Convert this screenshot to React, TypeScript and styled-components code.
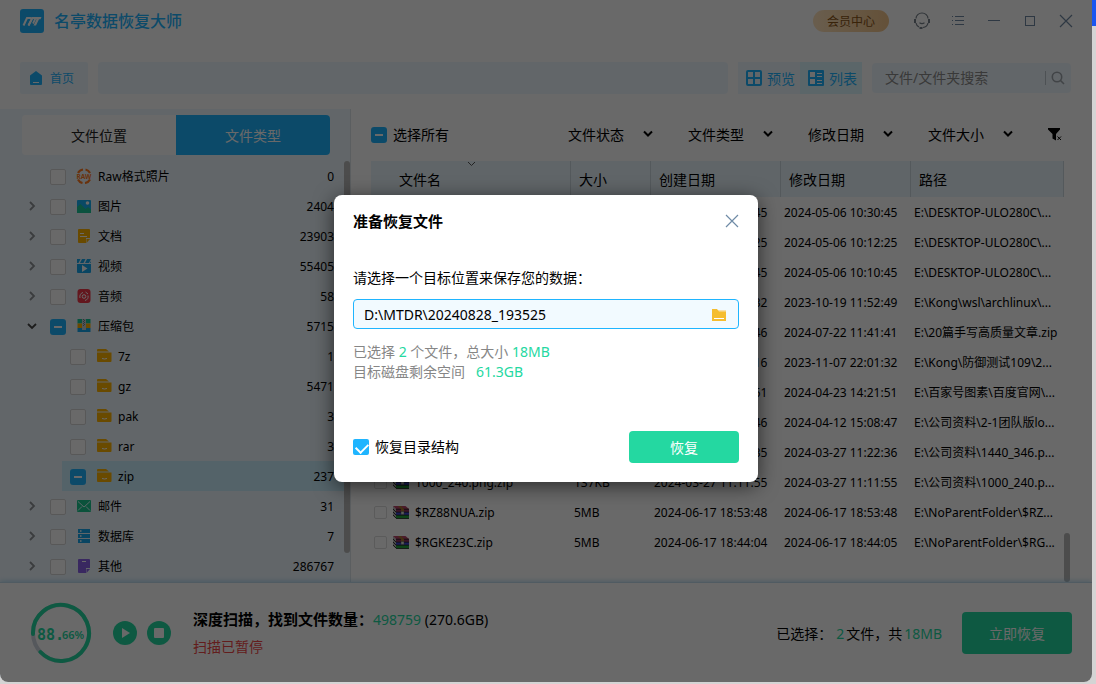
import React, { useEffect, useRef, useState } from "react";
import styled, { createGlobalStyle } from "styled-components";

const blue = "#1fb5ff";
const green = "#24d8a1";
const paleBlue = "#eff8ff";
const font = '"Noto Sans", "Noto Sans CJK SC", sans-serif';

const GlobalStyle = createGlobalStyle`
  * { box-sizing: border-box; }
  body { margin: 0; font-family: ${font}; font-size: 14px; color: #000; background: #d4d4d4; }
  button, input { font: inherit; color: inherit; }
  button { background: none; border: 0; padding: 0; cursor: pointer; white-space: nowrap; }
  ul { list-style: none; margin: 0; padding: 0; }
  p, h1, h2 { margin: 0; }
`;

const Desktop = styled.div`
  height: 100vh;
  min-height: 600px;
  padding: 0 4px 2px 0;
  background: linear-gradient(#1a56f0, #1a56f0) no-repeat top right / 4px 26px, #d4d4d4;
`;

const Window = styled.div`
  position: relative;
  height: 100%;
  display: flex;
  flex-direction: column;
  overflow: hidden;
  background: #fff;
  border-radius: 0 0 8px 8px;
`;

const TitleBar = styled.header`
  display: flex;
  align-items: center;
  height: 42px;
  padding: 0 18px 0 20px;
`;

const AppName = styled.h1`
  flex: 1;
  margin-left: 10px;
  font-size: 16px;
  line-height: 22px;
  font-weight: 500;
  color: ${blue};
`;

const MemberButton = styled.button`
  width: 76px;
  height: 22px;
  margin-right: 25px;
  border-radius: 11px;
  font-size: 12px;
  color: #8a5518;
  background: linear-gradient(90deg, #ffe3bd, #f2c48a);
`;

const WindowControls = styled.div`
  display: flex;
  gap: 20px;
  color: #7189a3;
  button { display: flex; width: 16px; height: 16px; }
`;

const Toolbar = styled.div`
  display: flex;
  align-items: center;
  height: 67px;
  padding: 5px 21px 0 20px;
  gap: 10px;
`;

const HomeButton = styled.button`
  display: flex;
  align-items: center;
  gap: 8px;
  width: 68px;
  height: 32px;
  padding-left: 10px;
  border-radius: 2px;
  background: ${paleBlue};
  color: ${blue};
  font-size: 12px;
`;

const AddressBar = styled.div`
  flex: 1;
  height: 32px;
  border-radius: 4px;
  background: ${paleBlue};
`;

const ViewSwitch = styled.div`
  display: flex;
`;

const ViewButton = styled.button<{ $active?: boolean }>`
  display: flex;
  align-items: center;
  gap: 5px;
  width: 62px;
  height: 32px;
  padding-left: 8px;
  color: ${blue};
  background: ${(p) => (p.$active ? "#dcf7ff" : paleBlue)};
`;

const SearchBox = styled.div`
  display: flex;
  align-items: center;
  width: 199px;
  height: 30px;
  padding: 0 6px 0 13px;
  border-radius: 4px;
  background: ${paleBlue};
  input {
    flex: 1;
    min-width: 0;
    border: 0;
    padding: 0 0 2px;
    outline: 0;
    background: none;
  }
  input::placeholder { color: #8a8a8a; opacity: 1; }
  button {
    display: flex;
    padding-left: 5px;
    border-left: 1px solid #bcc6cc;
    color: #9fa6ac;
  }
`;

const Body = styled.div`
  flex: 1;
  min-height: 0;
  display: flex;
`;

const Sidebar = styled.aside`
  width: 351px;
  padding-top: 6px;
  display: flex;
  flex-direction: column;
  background: ${paleBlue};
  border-right: 1px solid #dde5ea;
  overflow: hidden;
`;

const Tabs = styled.div`
  display: flex;
  height: 40px;
  margin: 0 20px 0 22px;
  border-radius: 4px;
  overflow: hidden;
  flex-shrink: 0;
`;

const Tab = styled.button<{ $active?: boolean }>`
  flex: 1;
  background: ${(p) => (p.$active ? blue : "#fff")};
  color: ${(p) => (p.$active ? "#fff" : "#222")};
`;

const TreeArea = styled.div`
  display: flex;
  flex: 1;
  min-height: 0;
  padding-top: 6px;
`;

const Tree = styled.ul`
  flex: 1;
  min-width: 0;
  overflow: hidden;
`;

const TreeRow = styled.li<{ $child?: boolean; $active?: boolean }>`
  display: flex;
  align-items: center;
  height: 30px;
  margin-left: ${(p) => (p.$child ? 62 : 22)}px;
  padding: 2px 10px 0 8px;
  font-size: 12px;
  background: ${(p) => (p.$active ? "#cdf0ff" : "transparent")};
  label { flex: 1; white-space: nowrap; }
  label, output { padding-bottom: 2px; }
`;

const Expander = styled.div`
  display: flex;
  width: 20px;
  height: 16px;
  align-items: center;
  button { display: flex; margin: 0 0 2px -3px; }
`;

const TypeIcon = styled.svg`
  width: 16px;
  height: 16px;
  margin: 0 6px 2px 10px;
  flex-shrink: 0;
`;

const Scrollbar = styled.div<{ $top: number; $height?: number }>`
  width: 6px;
  height: ${(p) => (p.$height ? p.$height + "px" : "auto")};
  margin-top: ${(p) => p.$top}px;
  border-radius: 3px;
  background: #b9b9b9;
  flex-shrink: 0;
`;

const CheckInput = styled.input<{ $tone: "tree" | "row" | "solid" }>`
  appearance: none;
  position: relative;
  flex-shrink: 0;
  width: ${(p) => (p.$tone === "row" ? 13 : 16)}px;
  height: ${(p) => (p.$tone === "row" ? 13 : 16)}px;
  margin: 0;
  border: 1px solid ${(p) => (p.$tone === "row" ? "#dcdcdc" : "#d6d6d6")};
  border-radius: 2px;
  background: #fff;
  &:indeterminate {
    border: 0;
    border-radius: 3px;
    background: linear-gradient(#fff, #fff) no-repeat center / 8px 2px, ${blue};
  }
  &:checked {
    border: 0;
    background: ${blue};
  }
  &:checked::after {
    content: "";
    position: absolute;
    left: 5px;
    top: 2px;
    width: 6px;
    height: 10px;
    border: solid #fff;
    border-width: 0 2px 2px 0;
    transform: rotate(45deg);
  }
`;

const Main = styled.main`
  flex: 1;
  min-width: 0;
  display: flex;
  flex-direction: column;
  padding-left: 20px;
`;

const FilterBar = styled.div`
  display: flex;
  align-items: center;
  height: 52px;
  padding-right: 29px;
`;

const SelectAll = styled.div`
  flex: 1;
  display: flex;
  align-items: center;
  gap: 6px;
  label { padding-bottom: 2px; }
`;

const FilterButton = styled.button`
  display: flex;
  align-items: center;
  justify-content: space-between;
  width: 85px;
  margin-right: 35px;
  padding-bottom: 2px;
`;

const TableArea = styled.div`
  flex: 1;
  min-height: 0;
  display: flex;
  padding-right: 22px;
`;

const TableClip = styled.div`
  flex: 1;
  min-width: 0;
  overflow: hidden;
`;

const FileTable = styled.table`
  width: 100%;
  table-layout: fixed;
  border-collapse: separate;
  border-spacing: 0;
  th {
    position: relative;
    height: 36px;
    padding: 0 8px;
    text-align: left;
    font-weight: 400;
    background: #e8f5fd;
    border-right: 1px solid #cbd8df;
  }
  th:first-child { padding-left: 28px; }
  td {
    height: 30px;
    padding: 0 0 0 3px;
    font-size: 12px;
    white-space: nowrap;
    overflow: hidden;
  }
`;

const SortMark = styled.svg`
  position: absolute;
  left: 96px;
  top: 0;
`;

const FileLabel = styled.label`
  display: flex;
  align-items: center;
  gap: 6px;
`;

const Footer = styled.footer`
  position: relative;
  display: flex;
  align-items: center;
  height: 100px;
  padding: 0 20px 0 30px;
  border-top: 1px solid #c3deef;
  box-shadow: 0 -1px 5px rgba(120, 190, 230, 0.5);
  background: #fff;
`;

const ScanControls = styled.div`
  display: flex;
  gap: 10px;
  margin: 0 22px 0 21px;
  button { display: flex; }
`;

const ScanStatus = styled.div`
  flex: 1;
  line-height: 27px;
  white-space: nowrap;
  strong { font-size: 15px; }
`;

const Accent = styled.span`
  color: ${green};
`;

const Paused = styled.p`
  color: #f04848;
`;

const Summary = styled.p`
  margin-right: 20px;
  white-space: nowrap;
`;

const SelectedCount = styled(Accent)`
  margin: 0 2px 0 4px;
`;

const SelectedSize = styled(Accent)`
  margin-left: 2px;
`;

const PrimaryButton = styled.button<{ $large?: boolean }>`
  width: 110px;
  height: ${(p) => (p.$large ? 42 : 32)}px;
  border-radius: 4px;
  background: ${green};
  color: #fff;
`;

const Overlay = styled.div`
  position: absolute;
  inset: 0;
  display: flex;
  align-items: center;
  justify-content: center;
  padding-bottom: 5px;
  background: rgba(0, 0, 0, 0.59);
`;

const Dialog = styled.section`
  width: 424px;
  padding: 14px 19px 19px;
  border-radius: 8px;
  background: #fff;
  box-shadow: 0 4px 20px rgba(0, 0, 0, 0.6);
`;

const DialogHeader = styled.div`
  display: flex;
  align-items: center;
  justify-content: space-between;
  height: 24px;
  h2 { font-size: 15px; font-weight: 700; line-height: 24px; }
  button { display: flex; margin-right: -1px; color: #6f8ba6; }
`;

const TargetLabel = styled.label`
  display: block;
  margin: 34px 0 10px;
  line-height: 22px;
`;

const PathField = styled.div`
  display: flex;
  align-items: center;
  height: 30px;
  padding: 0 11px 0 10px;
  border: 1px solid ${blue};
  border-radius: 4px;
  background: #f2faff;
  input {
    flex: 1;
    min-width: 0;
    padding: 0;
    border: 0;
    outline: 0;
    background: none;
  }
  button { display: flex; padding-top: 2px; }
`;

const Details = styled.div`
  margin: 13px 0 49px;
  line-height: 20px;
  color: #868686;
`;

const DialogFooter = styled.div`
  display: flex;
  align-items: center;
  justify-content: space-between;
`;

const CheckOption = styled.div`
  display: flex;
  align-items: center;
  gap: 6px;
  label { padding-bottom: 2px; }
`;

type CheckProps = { id?: string; mixed?: boolean; tone: "tree" | "row" | "solid"; initial?: boolean; label?: string };

function Check({ id, mixed, tone, initial = false, label }: CheckProps) {
  const ref = useRef<HTMLInputElement>(null);
  const [on, setOn] = useState(initial);
  useEffect(() => {
    if (ref.current) ref.current.indeterminate = !!mixed;
  }, [mixed]);
  return (
    <CheckInput ref={ref} id={id} type="checkbox" $tone={tone} checked={on} aria-label={label} onChange={(e) => setOn(e.target.checked)} />
  );
}

const Chevron = ({ open }: { open?: boolean }) => (
  <svg width="10" height="10" viewBox="0 0 10 10" fill="none" stroke={open ? "#444" : "#8d9296"} strokeWidth="1.8">
    <path d={open ? "M1 3l4 4 4-4" : "M3 1l4 4-4 4"} />
  </svg>
);

const icons: Record<string, React.ReactNode> = {
  raw: (
    <>
      <path d="M2 5a6.700 6.700 0 0 1 5-3.500M9.500 1.500A6.700 6.700 0 0 1 14 5M2 11.500A6.700 6.700 0 0 0 6.500 15M9 15a6.700 6.700 0 0 0 5-3.500" fill="none" stroke="#ff7a20" strokeWidth="2.200" />
      <text x="8" y="10.5" textAnchor="middle" fontSize="6.5" fontWeight="700" fill="#ff7a20">RAW</text>
    </>
  ),
  image: (
    <>
      <rect x="1" y="2" width="14" height="13" rx="1" fill="#17b1f5" />
      <path d="M1 9l3.500-3 5 5 2.500-2 3 2.500V15H1z" fill="#1cc79a" />
      <circle cx="11.5" cy="5" r="1.800" fill="#fff" />
    </>
  ),
  doc: (
    <>
      <path d="M2 2a1 1 0 0 1 1-1h10a1 1 0 0 1 1 1v8h-4v5H3a1 1 0 0 1-1-1z" fill="#ffb400" />
      <path d="M14 11l-3.500 4v-4z" fill="#ffb400" />
      <path d="M4 5.500h4M4 8.500h7" stroke="#fff" />
    </>
  ),
  video: (
    <>
      <path d="M1 6h14v8a1 1 0 0 1-1 1H2a1 1 0 0 1-1-1zM1 1h3.500L2.500 5H1zM6 1h3.500l-2 4H4zM11 1h4l-2 4H9zM15 3v2h-1z" fill="#17a9ef" />
      <path d="M6 7l5.500 3.500L6 14z" fill="#fff" />
    </>
  ),
  audio: (
    <>
      <rect x="1.500" y="1" width="13" height="14" rx="3" fill="#f0384a" />
      <circle cx="8" cy="8.500" r="1.800" fill="none" stroke="#fff" />
      <path d="M4 10a4.300 4.300 0 0 1 3-5.500M12 7.500a4.300 4.300 0 0 1-3 5M9.500 4l2.500 2" fill="none" stroke="#fff" />
    </>
  ),
  archive: (
    <>
      <path d="M1.500 1h13v4.500h-13z" fill="#17c79a" />
      <path d="M1.500 5.500h13v4.500h-13z" fill="#ffb400" />
      <path d="M1.500 10h13v4h-13z" fill="#17a9ef" />
      <path d="M6 1h4v8H6z" fill="#c2ced3" />
      <path d="M7.500 1v8M8.500 2v8" stroke="#71818a" strokeDasharray="1 1" />
      <rect x="6" y="8" width="4" height="4" fill="#c2ced3" />
    </>
  ),
  folder: (
    <>
      <path d="M1 2a1 1 0 0 1 1-1h8l3 2.500H1zM1 4.500h14.500V13a1 1 0 0 1-1 1H2a1 1 0 0 1-1-1z" fill="#ffb400" />
      <path d="M6 10.500q2.500 1 5 0" fill="none" stroke="#fff" />
    </>
  ),
  mail: (
    <>
      <rect x="1" y="2" width="14" height="12" rx="1" fill="#1cc78f" />
      <path d="M2 3.500l6 5.500 6-5.500M2 12.500l4-4M14 12.500l-4-4" fill="none" stroke="#dff" />
    </>
  ),
  database: (
    <>
      <path d="M2 1h12v4H2zM2 6h12v4H2zM2 11h12v4H2z" fill="#17a9ef" />
      <path d="M4 3h1.500M4 8h1.500M4 13h1.500" stroke="#fff" strokeWidth="1.500" />
    </>
  ),
  other: (
    <>
      <path d="M2 2a1 1 0 0 1 1-1h10a1 1 0 0 1 1 1v8h-4v5H3a1 1 0 0 1-1-1z" fill="#8a62e8" />
      <path d="M14 11l-3.500 4v-4z" fill="#8a62e8" />
      <path d="M6 3.500h4" stroke="#fff" />
    </>
  ),
};

type Node = { name: string; count: number; icon: string; expand?: "open" | "closed"; child?: boolean; mixed?: boolean; active?: boolean };

const nodes: Node[] = [
  { name: "Raw格式照片", count: 0, icon: "raw" },
  { name: "图片", count: 2404, icon: "image", expand: "closed" },
  { name: "文档", count: 23903, icon: "doc", expand: "closed" },
  { name: "视频", count: 55405, icon: "video", expand: "closed" },
  { name: "音频", count: 58, icon: "audio", expand: "closed" },
  { name: "压缩包", count: 5715, icon: "archive", expand: "open", mixed: true },
  { name: "7z", count: 1, icon: "folder", child: true },
  { name: "gz", count: 5471, icon: "folder", child: true },
  { name: "pak", count: 3, icon: "folder", child: true },
  { name: "rar", count: 3, icon: "folder", child: true },
  { name: "zip", count: 237, icon: "folder", child: true, mixed: true, active: true },
  { name: "邮件", count: 31, icon: "mail", expand: "closed" },
  { name: "数据库", count: 7, icon: "database", expand: "closed" },
  { name: "其他", count: 286767, icon: "other", expand: "closed" },
];

const files = [
  ["", "", "2024-05-06 10:30:45", "2024-05-06 10:30:45", "E:\\DESKTOP-ULO280C\\..."],
  ["", "", "2024-05-06 10:12:25", "2024-05-06 10:12:25", "E:\\DESKTOP-ULO280C\\..."],
  ["", "", "2024-05-06 10:10:45", "2024-05-06 10:10:45", "E:\\DESKTOP-ULO280C\\..."],
  ["", "", "2023-10-19 11:52:32", "2023-10-19 11:52:49", "E:\\Kong\\wsl\\archlinux\\..."],
  ["", "", "2024-07-22 11:41:46", "2024-07-22 11:41:41", "E:\\20篇手写高质量文章.zip"],
  ["", "", "2023-11-07 22:01:16", "2023-11-07 22:01:32", "E:\\Kong\\防御测试109\\2..."],
  ["", "", "2024-04-23 14:21:51", "2024-04-23 14:21:51", "E:\\百家号图素\\百度官网\\..."],
  ["", "", "2024-04-12 15:08:46", "2024-04-12 15:08:47", "E:\\公司资料\\2-1团队版lo..."],
  ["", "", "2024-03-27 11:22:35", "2024-03-27 11:22:36", "E:\\公司资料\\1440_346.p..."],
  ["1000_240.png.zip", "137KB", "2024-03-27 11:11:55", "2024-03-27 11:11:55", "E:\\公司资料\\1000_240.p..."],
  ["$RZ88NUA.zip", "5MB", "2024-06-17 18:53:48", "2024-06-17 18:53:48", "E:\\NoParentFolder\\$RZ..."],
  ["$RGKE23C.zip", "5MB", "2024-06-17 18:44:04", "2024-06-17 18:44:05", "E:\\NoParentFolder\\$RG..."],
];

const RarIcon = () => (
  <svg width="16" height="14" viewBox="0 0 16 14">
    <path d="M0 1l3 3v9.500L0 11z" fill="#b9b9b9" />
    <path d="M0 4l3 3M0 7l3 3M0 10l3 3" stroke="#333" />
    <path d="M0 1h12.500L16 4H3z" fill="#b8456a" />
    <path d="M3 4h13v3H3z" fill="#93325f" />
    <path d="M3 7h13v3H3z" fill="#3f46d0" />
    <path d="M3 10h13v3.500H3z" fill="#23a03c" />
    <path d="M3 4.200h13M3 7.200h13M3 10.200h13M3 13.500h13" stroke="#222" strokeWidth=".800" />
    <path d="M5 1h3l3 3v5H8V4z" fill="#a5762f" />
    <path d="M8 6.500h3v3H8z" fill="#ddd" stroke="#555" strokeWidth=".500" />
  </svg>
);

const CloseIcon = () => (
  <svg width="16" height="16" viewBox="0 0 16 16" fill="none" stroke="currentColor" strokeWidth="1.200">
    <path d="M2 2l12 12M14 2L2 14" />
  </svg>
);

export default function App() {
  return (
    <Desktop>
      <GlobalStyle />
      <Window>
        <TitleBar>
          <svg width="24" height="24" viewBox="0 0 24 24">
            <rect width="24" height="24" rx="3" fill={blue} />
            <path d="M3.500 16.500L7 9h3.500q1.500 0 1 1.500L8.500 16.500" fill="none" stroke="#fff" strokeWidth="2" />
            <path d="M8.500 16.500L12.500 9h1.500q1.500 0 1 1.500l-2 4" fill="none" stroke="#fff" strokeWidth="1.800" />
            <path d="M14 8h7.500l-1 2.200h-1.500l-3 6.300h-2.500l3-6.300h-3z" fill="#fff" />
          </svg>
          <AppName>名亭数据恢复大师</AppName>
          <MemberButton>会员中心</MemberButton>
          <WindowControls>
            <button aria-label="客服">
              <svg width="16" height="16" viewBox="0 0 16 16" fill="none" stroke="#77808a" strokeWidth="1.200" overflow="visible">
                <path d="M2 5.500a6 5.500 0 0 1 12 0M2 10a6 5.500 0 0 0 3 4M14 10a6 5.500 0 0 1-5 4.500M5.500 9.800q2.500 1.500 5 0" />
                <path d="M1 6v4M15 6v4M5.500 15h3" strokeWidth="2" />
              </svg>
            </button>
            <button aria-label="菜单">
              <svg width="16" height="16" viewBox="0 0 16 16" stroke="currentColor">
                <path d="M2 3.500h1M2 7.500h1M2 11.500h1M5 3.500h9M5 7.500h9M5 11.500h9" />
              </svg>
            </button>
            <button aria-label="最小化">
              <svg width="16" height="16" viewBox="0 0 16 16" stroke="currentColor"><path d="M2 7.500h12" /></svg>
            </button>
            <button aria-label="最大化">
              <svg width="16" height="16" viewBox="0 0 16 16" fill="none" stroke="currentColor"><rect x="3.500" y="3.500" width="9" height="9" /></svg>
            </button>
            <button aria-label="关闭"><CloseIcon /></button>
          </WindowControls>
        </TitleBar>
        <Toolbar>
          <HomeButton>
            <svg width="12" height="14" viewBox="0 0 12 14">
              <path d="M6 0l6 4.500V13a1 1 0 0 1-1 1H1a1 1 0 0 1-1-1V4.500z" fill={blue} />
              <path d="M3 11.500h6" stroke="#fff" />
            </svg>
            首页
          </HomeButton>
          <AddressBar />
          <ViewSwitch>
            <ViewButton>
              <svg width="16" height="16" viewBox="0 0 16 16" fill="none" stroke={blue} strokeWidth="2">
                <rect x="1" y="1" width="14" height="14" rx="1" /><path d="M8 1v14M1 8h14" />
              </svg>
              预览
            </ViewButton>
            <ViewButton $active>
              <svg width="16" height="16" viewBox="0 0 16 16" stroke="#fff">
                <rect width="16" height="16" rx="1" fill={blue} stroke="none" />
                <path d="M2 2h5v5H2zM2 9h5v5H2z" fill="#fff" stroke="none" />
                <path d="M9 3.500h5M9 6.500h5M9 10.500h5M9 13.500h5" />
              </svg>
              列表
            </ViewButton>
          </ViewSwitch>
          <SearchBox>
            <input type="text" placeholder="文件/文件夹搜索" aria-label="搜索" />
            <button aria-label="搜索">
              <svg width="14" height="14" viewBox="0 0 14 14" fill="none" stroke="currentColor" strokeWidth="1.600">
                <circle cx="6" cy="6" r="4.700" /><path d="M9.500 9.500L13 13" />
              </svg>
            </button>
          </SearchBox>
        </Toolbar>
        <Body>
          <Sidebar>
            <Tabs>
              <Tab>文件位置</Tab>
              <Tab $active>文件类型</Tab>
            </Tabs>
            <TreeArea>
              <Tree>
                {nodes.map((n) => (
                  <TreeRow key={n.name} $child={n.child} $active={n.active}>
                    {!n.child && (
                      <Expander>
                        {n.expand && <button aria-label={n.name}><Chevron open={n.expand === "open"} /></button>}
                      </Expander>
                    )}
                    <Check id={`type-${n.name}`} tone="tree" mixed={n.mixed} />
                    <TypeIcon viewBox="0 0 16 16">{icons[n.icon]}</TypeIcon>
                    <label htmlFor={`type-${n.name}`}>{n.name}</label>
                    <output>{n.count}</output>
                  </TreeRow>
                ))}
              </Tree>
              <Scrollbar $top={0} $height={392} />
            </TreeArea>
          </Sidebar>
          <Main>
            <FilterBar>
              <SelectAll>
                <Check id="select-all" tone="solid" mixed />
                <label htmlFor="select-all">选择所有</label>
              </SelectAll>
              {["文件状态", "文件类型", "修改日期", "文件大小"].map((f) => (
                <FilterButton key={f}>
                  {f}
                  <svg width="10" height="10" viewBox="0 0 10 10" fill="none" stroke="#000" strokeWidth="2"><path d="M1 2.500l4 4 4-4" /></svg>
                </FilterButton>
              ))}
              <button aria-label="清除筛选">
                <svg width="15" height="14" viewBox="0 0 15 14">
                  <path d="M0 1h12v1.500L8 7v6.500l-3.500-2V7L0 2.500z" />
                  <path d="M9.500 9.500l3.500 3.500M13 9.500L9.500 13" stroke="#000" />
                </svg>
              </button>
            </FilterBar>
            <TableArea>
              <TableClip>
                <FileTable>
                  <colgroup>
                    <col width="200" /><col width="80" /><col width="130" /><col width="130" /><col />
                  </colgroup>
                  <thead>
                    <tr>
                      <th>
                        文件名
                        <SortMark width="9" height="6" viewBox="0 0 9 6" fill="none" stroke="#555"><path d="M1 1l3.500 3.500L8 1" /></SortMark>
                      </th>
                      <th>大小</th><th>创建日期</th><th>修改日期</th><th>路径</th>
                    </tr>
                  </thead>
                  <tbody>
                    {files.map(([name, size, created, modified, path]) => (
                      <tr key={modified}>
                        <td><FileLabel><Check tone="row" /><RarIcon />{name}</FileLabel></td>
                        <td>{size}</td><td>{created}</td><td>{modified}</td><td>{path}</td>
                      </tr>
                    ))}
                  </tbody>
                </FileTable>
              </TableClip>
              <Scrollbar $top={372} />
            </TableArea>
          </Main>
        </Body>
        <Footer>
          <svg width="62" height="62" viewBox="0 0 62 62" role="img" aria-label="88.66%">
            <circle cx="31" cy="31" r="28" fill="none" stroke="#cfd5df" strokeWidth="4" />
            <path d="M3 32a28 28 0 1 1 7.500 18" fill="none" stroke={green} strokeWidth="4" strokeLinecap="round" />
            <text x="7" y="38" fontSize="15" fontWeight="700" fill={green} fontFamily="DejaVu Sans Mono">88.</text>
            <text x="32" y="37" fontSize="11" fontWeight="600" fill={green}>66%</text>
          </svg>
          <ScanControls>
            <button aria-label="继续">
              <svg width="24" height="24" viewBox="0 0 24 24"><circle cx="12" cy="12" r="12" fill={green} /><path d="M9 7l8 5-8 5z" fill="#fff" /></svg>
            </button>
            <button aria-label="停止">
              <svg width="24" height="24" viewBox="0 0 24 24"><circle cx="12" cy="12" r="12" fill={green} /><rect x="7" y="7" width="10" height="10" rx="1" fill="#fff" /></svg>
            </button>
          </ScanControls>
          <ScanStatus>
            <p><strong>深度扫描，找到文件数量：</strong><Accent>498759</Accent> (270.6GB)</p>
            <Paused>扫描已暂停</Paused>
          </ScanStatus>
          <Summary>已选择：<SelectedCount>2</SelectedCount>文件，共<SelectedSize>18MB</SelectedSize></Summary>
          <PrimaryButton $large>立即恢复</PrimaryButton>
        </Footer>
        <Overlay>
          <Dialog role="dialog" aria-modal="true" aria-labelledby="dialog-title">
            <DialogHeader>
              <h2 id="dialog-title">准备恢复文件</h2>
              <button aria-label="关闭"><CloseIcon /></button>
            </DialogHeader>
            <TargetLabel htmlFor="target">请选择一个目标位置来保存您的数据：</TargetLabel>
            <PathField>
              <input id="target" type="text" defaultValue="D:\MTDR\20240828_193525" />
              <button aria-label="浏览">
                <svg width="16" height="14" viewBox="0 0 16 14">
                  <path d="M7 2h8v3H7z" fill="#f6e0ae" />
                  <path d="M1 1h5l2 2.500h7V13H1z" fill="#f5bd2f" />
                  <path d="M3 10.500h10" stroke="#fff" />
                </svg>
              </button>
            </PathField>
            <Details>
              <p>已选择 <Accent>2</Accent> 个文件，总大小 <Accent>18MB</Accent></p>
              <p>目标磁盘剩余空间 &nbsp; <Accent>61.3GB</Accent></p>
            </Details>
            <DialogFooter>
              <CheckOption>
                <Check id="keep-tree" tone="solid" initial />
                <label htmlFor="keep-tree">恢复目录结构</label>
              </CheckOption>
              <PrimaryButton>恢复</PrimaryButton>
            </DialogFooter>
          </Dialog>
        </Overlay>
      </Window>
    </Desktop>
  );
}
